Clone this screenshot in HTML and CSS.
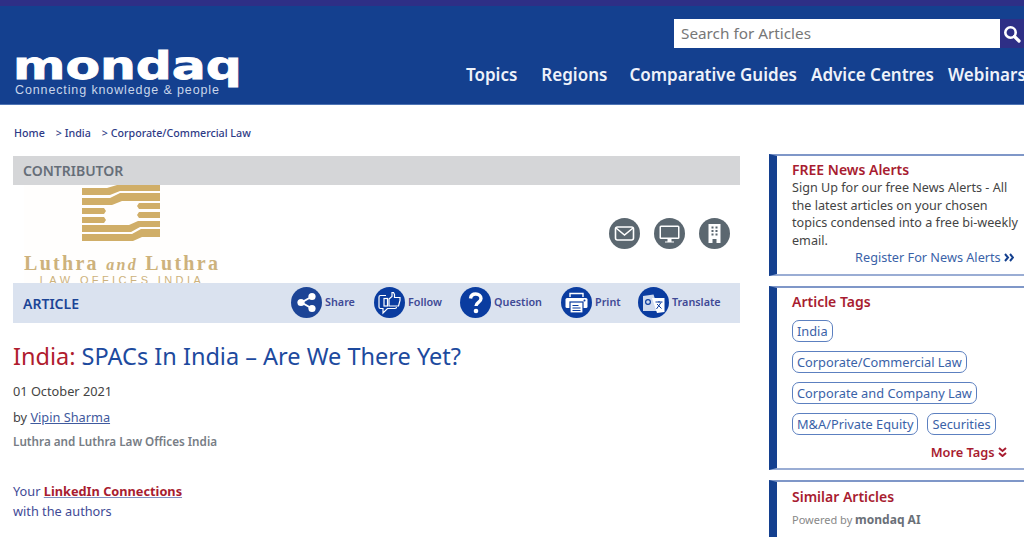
FILE: index.html
```html
<!DOCTYPE html>
<html lang="en">
<head>
  <meta charset="UTF-8">
  <meta name="viewport" content="width=device-width, initial-scale=1.0">
  <title>SPACs In India – Are We There Yet?</title>
  <link rel="stylesheet" href="styles.css">
</head>
<body>
  <div class="page">
    <header class="header">
      <a class="logo" href="#">
        <span class="logo-word">mondaq</span>
        <span class="logo-tag">Connecting knowledge &amp; people</span>
      </a>
      <div class="header-right">
        <form class="search">
          <span class="search-text">Search for Articles</span>
          <span class="search-btn">
            <svg width="18" height="18" viewBox="0 0 18 18"><circle cx="7.5" cy="7.5" r="5.2" fill="none" stroke="#fff" stroke-width="2.6"/><path d="M11.5 11.5L16 16" stroke="#fff" stroke-width="3.2" stroke-linecap="round"/></svg>
          </span>
        </form>
        <nav class="nav">
          <a class="nav-wide" href="#">Topics</a>
          <a class="nav-mid" href="#">Regions</a>
          <a href="#">Comparative Guides</a>
          <a href="#">Advice Centres</a>
          <a href="#">Webinars</a>
        </nav>
      </div>
    </header>

    <div class="content">
      <main class="main">
        <div class="crumbs">
          <a href="#">Home</a>
          <a href="#">&gt; India</a>
          <a href="#">&gt; Corporate/Commercial Law</a>
        </div>

        <div class="contributor-bar">CONTRIBUTOR</div>
        <div class="contributor">
          <div class="firm-logo">
            <svg class="firm-mark" width="78" height="56" viewBox="0 0 78 56">
              <g fill="#d0ae68">
                <path d="M0 3H25L35 0H78V6H38L28 10H0Z"/>
                <path d="M0 13H28L38 8H78V16H40L30 20H0Z"/>
                <path d="M0 23H22L24 26L22 29H0Z"/>
                <path d="M0 32H22L24 35L22 38H0Z"/>
                <path d="M57 18H78V24H57L55 21Z"/>
                <path d="M57 27H78V33H57L55 30Z"/>
                <path d="M0 40H47L56 36H78V42H58L49 47H0Z"/>
                <path d="M0 49H50L59 44H78V52H60L51 56H0Z"/>
              </g>
            </svg>
            <div class="firm-name">Luthra <i>and</i> Luthra</div>
            <div class="firm-sub">LAW OFFICES INDIA</div>
          </div>
          <div class="contact-icons">
            <span class="contact-icon">
              <svg width="31" height="31" viewBox="0 0 31 31"><rect x="6.5" y="9" width="18" height="13" rx="2" fill="none" stroke="#fff" stroke-width="1.6"/><path d="M7 10l8.500 7 8.500-7" fill="none" stroke="#fff" stroke-width="1.6"/></svg>
            </span>
            <span class="contact-icon">
              <svg width="31" height="31" viewBox="0 0 31 31"><rect x="5.500" y="7.500" width="20" height="13.500" rx="1.500" fill="#fff"/><rect x="7" y="9" width="17" height="10.500" fill="#5b6770"/><path d="M13.500 21h4v2.500h2.500v1h-9v-1h2.500z" fill="#fff"/></svg>
            </span>
            <span class="contact-icon">
              <svg width="31" height="31" viewBox="0 0 31 31"><path d="M9.500 6h12v19h-4v-4h-4v4h-4z" fill="#fff"/><path d="M12.500 8.500h2v2h-2zM16.500 8.500h2v2h-2zM12.500 12h2v2h-2zM16.500 12h2v2h-2zM12.500 15.500h2v2h-2zM16.500 15.500h2v2h-2z" fill="#5b6770"/></svg>
            </span>
          </div>
        </div>

        <div class="article-bar">
          <span class="article-label">ARTICLE</span>
          <div class="actions">
            <a class="action action-share" href="#">
              <svg width="31" height="31" viewBox="0 0 31 31"><circle cx="15.500" cy="15.500" r="15.500" fill="#1c4496"/><path d="M21 9.500L10.500 15.500L21 21.500" fill="none" stroke="#fff" stroke-width="2"/><circle cx="21" cy="9.500" r="3.600" fill="#fff"/><circle cx="10" cy="15.500" r="3.600" fill="#fff"/><circle cx="21" cy="21.500" r="3.600" fill="#fff"/></svg>
              <span>Share</span>
            </a>
            <a class="action action-follow" href="#">
              <svg width="31" height="31" viewBox="0 0 31 31"><circle cx="15.500" cy="15.500" r="15.500" fill="#0a3ca0"/><path d="M12 8.500H6.500A1.500 1.500 0 0 0 5 10v10a1.500 1.500 0 0 0 1.500 1.500H9v4.500l4.500-4.500H21a1.500 1.500 0 0 0 1.500-1.500" fill="none" stroke="#fff" stroke-width="1.200"/><rect x="10" y="11.500" width="3.500" height="7.500" fill="none" stroke="#fff" stroke-width="1.200"/><path d="M15 12l3-2.500V5.500h1.500l1 2v3H26v3l-1.500 5.500H15z" fill="none" stroke="#fff" stroke-width="1.200"/></svg>
              <span>Follow</span>
            </a>
            <a class="action action-question" href="#">
              <svg width="31" height="31" viewBox="0 0 31 31"><circle cx="15.500" cy="15.500" r="15.500" fill="#0a3ca0"/><path d="M10.500 11.500c.4-3 2.600-4.500 5.200-4.500 3 0 5.300 1.800 5.300 4.500 0 4-5 3.800-5 7.500" fill="none" stroke="#fff" stroke-width="3.400"/><circle cx="16" cy="24" r="2.300" fill="#fff"/></svg>
              <span>Question</span>
            </a>
            <a class="action action-print" href="#">
              <svg width="31" height="31" viewBox="0 0 31 31"><circle cx="15.500" cy="15.500" r="15.500" fill="#0a3ca0"/><path d="M9 10V6.500h13V10" fill="none" stroke="#fff" stroke-width="1.400"/><rect x="4.500" y="11" width="22" height="10" rx="1.500" fill="#fff"/><circle cx="23.500" cy="13.500" r="1" fill="#0a3ca0"/><rect x="9" y="15" width="13" height="11" fill="#fff" stroke="#0a3ca0" stroke-width="1.200"/><path d="M11.500 18.500h6M11.500 21h8M11.500 23.500h8" stroke="#0a3ca0" stroke-width="1.200"/></svg>
              <span>Print</span>
            </a>
            <a class="action action-translate" href="#">
              <svg width="31" height="31" viewBox="0 0 31 31"><circle cx="15.500" cy="15.500" r="15.500" fill="#0a3ca0"/><path d="M5 9L15.500 7.500L21 24H5z" fill="#cfdaee"/><path d="M14 11h12.500v14L19 26z" fill="#fff"/><circle cx="10" cy="15" r="2.400" fill="none" stroke="#0a3ca0" stroke-width="1.200"/><path d="M17.500 15h7M21 14v1.500M18.500 22l4.500-6.500M19 17l4.500 4.500" fill="none" stroke="#0a3ca0" stroke-width="1"/></svg>
              <span>Translate</span>
            </a>
          </div>
        </div>

        <h1 class="title"><span class="title-region">India:</span> SPACs In India – Are We There Yet?</h1>
        <p class="date">01 October 2021</p>
        <p class="byline">by <a href="#">Vipin Sharma</a></p>
        <p class="firm">Luthra and Luthra Law Offices India</p>
        <p class="connections">Your <a href="#">LinkedIn Connections</a><br>with the authors</p>
      </main>

      <aside class="sidebar">
        <section class="card card-alerts">
          <h3>FREE News Alerts</h3>
          <p>Sign Up for our free News Alerts - All the latest articles on your chosen topics condensed into a free bi-weekly email.</p>
          <a class="register" href="#">Register For News Alerts
            <svg width="10" height="9" viewBox="0 0 10 9"><path d="M1 1l3 3.500L1 8M6 1l3 3.500L6 8" fill="none" stroke="#14408f" stroke-width="2"/></svg>
          </a>
        </section>

        <section class="card card-tags">
          <h3>Article Tags</h3>
          <div class="tags">
            <a class="tag" href="#">India</a>
            <a class="tag" href="#">Corporate/Commercial Law</a>
            <a class="tag" href="#">Corporate and Company Law</a>
            <a class="tag" href="#">M&amp;A/Private Equity</a>
            <a class="tag" href="#">Securities</a>
          </div>
          <a class="more-tags" href="#">More Tags
            <svg width="9" height="10" viewBox="0 0 9 10"><path d="M1 1l3.500 3L8 1M1 6l3.500 3L8 6" fill="none" stroke="#a81c30" stroke-width="2"/></svg>
          </a>
        </section>

        <section class="card card-similar">
          <h3>Similar Articles</h3>
          <p class="powered">Powered by <b>mondaq AI</b></p>
        </section>
      </aside>
    </div>
  </div>
</body>
</html>
```

FILE: styles.css
```css
html, body {
  margin: 0;
  padding: 0;
}
body {
  font-family: 'Noto Sans', sans-serif;
  background: white;
  color: #444;
}
a {
  text-decoration: none;
  color: inherit;
}
.page {
  height: 100vh;
  overflow: hidden;
}

/* header */
.header {
  display: flex;
  height: 98px;
  background: #14408f;
  border-top: 6px solid #2e2f86;
  border-bottom: 1px solid #4e74b4;
}
.logo {
  display: block;
  position: relative;
  width: 452px;
  flex: none;
  margin-left: 14px;
  color: white;
}
.logo-word {
  position: absolute;
  left: -1px;
  top: 37px;
  font-family: 'DejaVu Sans', sans-serif;
  font-weight: bold;
  font-size: 37px;
  line-height: 48px;
  -webkit-text-stroke: 0.8px white;
  transform: scaleX(1.36);
  transform-origin: left top;
}
.logo-tag {
  position: absolute;
  left: 1px;
  top: 77px;
  font-family: 'Liberation Sans', sans-serif;
  font-size: 12.500px;
  line-height: 14px;
  letter-spacing: 0.88px;
  color: #c9d6ea;
  white-space: nowrap;
}
.header-right {
  display: flex;
  flex-direction: column;
  align-items: flex-start;
  flex: none;
}
.search {
  display: flex;
  width: 350px;
  height: 29px;
  margin: 13px 0 0 208px;
  background: white;
}
.search-text {
  flex: 1;
  padding-left: 7px;
  font-size: 15.300px;
  line-height: 29px;
  color: #777;
}
.search-btn {
  display: flex;
  align-items: center;
  width: 24px;
  padding-left: 3px;
  box-sizing: border-box;
  background: #2e2f86;
}
.nav {
  display: flex;
  gap: 14px;
  margin-top: 14px;
  white-space: nowrap;
}
.nav a {
  font-size: 17px;
  font-weight: 600;
  line-height: 26px;
  color: #eef2fa;
}
.nav a.nav-wide {
  margin-right: 10px;
}
.nav a.nav-mid {
  margin-right: 8px;
}

/* layout */
.content {
  display: grid;
  grid-template-columns: 727px 1fr;
  gap: 29px;
  margin-left: 13px;
}

/* breadcrumbs */
.crumbs {
  display: flex;
  gap: 11px;
  padding: 20px 0 0 1px;
  height: 31px;
  font-size: 10.700px;
  font-weight: 500;
  line-height: 16px;
  color: #2e3a86;
}

/* contributor */
.contributor-bar {
  height: 29px;
  padding-left: 10px;
  background: #d5d6d8;
  font-size: 14px;
  font-weight: 600;
  line-height: 29px;
  color: #666e78;
}
.contributor {
  display: flex;
  justify-content: space-between;
  height: 98px;
  overflow: hidden;
}
.firm-logo {
  width: 196px;
  height: 98px;
  margin-left: 11px;
  background: #fffefd;
  text-align: center;
  color: #cdb27c;
  overflow: hidden;
}
.firm-mark {
  display: block;
  margin: 0 0 0 58px;
}
.firm-name {
  margin-top: 12px;
  font-family: 'Liberation Serif', serif;
  font-size: 20px;
  font-weight: bold;
  line-height: 20px;
  letter-spacing: 2.300px;
  white-space: nowrap;
}
.firm-name i {
  font-size: 16px;
}
.firm-sub {
  font-family: 'Liberation Sans', sans-serif;
  font-size: 11px;
  line-height: 11px;
  letter-spacing: 3.400px;
  white-space: nowrap;
}
.contact-icons {
  display: flex;
  gap: 14px;
  margin: 33px 10px 0 0;
}
.contact-icon {
  width: 31px;
  height: 31px;
  border-radius: 50%;
  background: #5b6770;
}

/* article bar */
.article-bar {
  display: flex;
  align-items: center;
  height: 40px;
  padding-left: 10px;
  background: #dae2ef;
}
.article-label {
  width: 268px;
  font-size: 14px;
  font-weight: 600;
  color: #1c4496;
}
.actions {
  display: flex;
  margin-top: -1px;
}
.action {
  display: flex;
  align-items: center;
  gap: 3px;
  font-size: 10.800px;
  font-weight: 600;
  color: #3f4a96;
}
.action span {
  margin-bottom: 3px;
}
.action-share { width: 83px; }
.action-follow { width: 86px; }
.action-question { width: 101px; }
.action-print { width: 77px; }

/* article head */
.title {
  margin: 18px 0 0;
  font-size: 23.500px;
  font-weight: 400;
  line-height: 30px;
  color: #1d4a9e;
}
.title-region {
  color: #b01c2e;
}
.date {
  margin: 11px 0 0;
  font-size: 12.750px;
  line-height: 18px;
}
.byline {
  margin: 8px 0 0;
  font-size: 12.750px;
  line-height: 18px;
}
.byline a {
  color: #3f5a9e;
  text-decoration: underline;
}
.firm {
  margin: 7px 0 0;
  font-size: 11.700px;
  font-weight: 600;
  line-height: 16px;
  color: #777d85;
}
.connections {
  margin: 32px 0 0;
  font-size: 12.750px;
  line-height: 20px;
  color: #3f4a96;
}
.connections a {
  font-weight: 700;
  color: #a81c30;
  text-decoration: underline;
  text-decoration-color: #7f8fc0;
}

/* sidebar */
.sidebar {
  padding-top: 49px;
}
.card {
  margin-bottom: 10px;
  padding: 5px 0 0 15px;
  background: white;
  border-left: 8px solid #14408f;
  border-top: 2px solid #7f97c8;
  border-bottom: 2px solid #9aadd4;
}
.card h3 {
  margin: 0;
  font-size: 14px;
  font-weight: 600;
  line-height: 18px;
  color: #a81c30;
}
.card p {
  margin: 0;
}
.card-alerts {
  height: 122px;
  box-sizing: border-box;
}
.card-alerts p {
  font-size: 12.600px;
  line-height: 17.500px;
  color: #444;
}
.register {
  display: block;
  margin-right: 10px;
  text-align: right;
  font-size: 12.700px;
  line-height: 17.500px;
  color: #3a62a8;
}
.card-tags {
  height: 184px;
  box-sizing: border-box;
}
.tags {
  display: flex;
  flex-wrap: wrap;
  gap: 9px;
  margin: 9px 17px 0 0;
}
.tag {
  height: 20px;
  padding: 0 4px;
  border: 1px solid #5c80c0;
  border-radius: 7px;
  font-size: 12.800px;
  line-height: 20px;
  color: #3a62a8;
  white-space: nowrap;
}
.more-tags {
  display: block;
  margin: 8px 17px 0 0;
  text-align: right;
  font-size: 12.800px;
  font-weight: 600;
  line-height: 18px;
  color: #a81c30;
}
.card-similar {
  height: 80px;
  padding-top: 6px;
  box-sizing: border-box;
}
.powered {
  margin-top: 6px !important;
  font-size: 11px;
  line-height: 16px;
  color: #888;
}
.powered b {
  font-size: 12px;
  color: #6a7078;
}
```
